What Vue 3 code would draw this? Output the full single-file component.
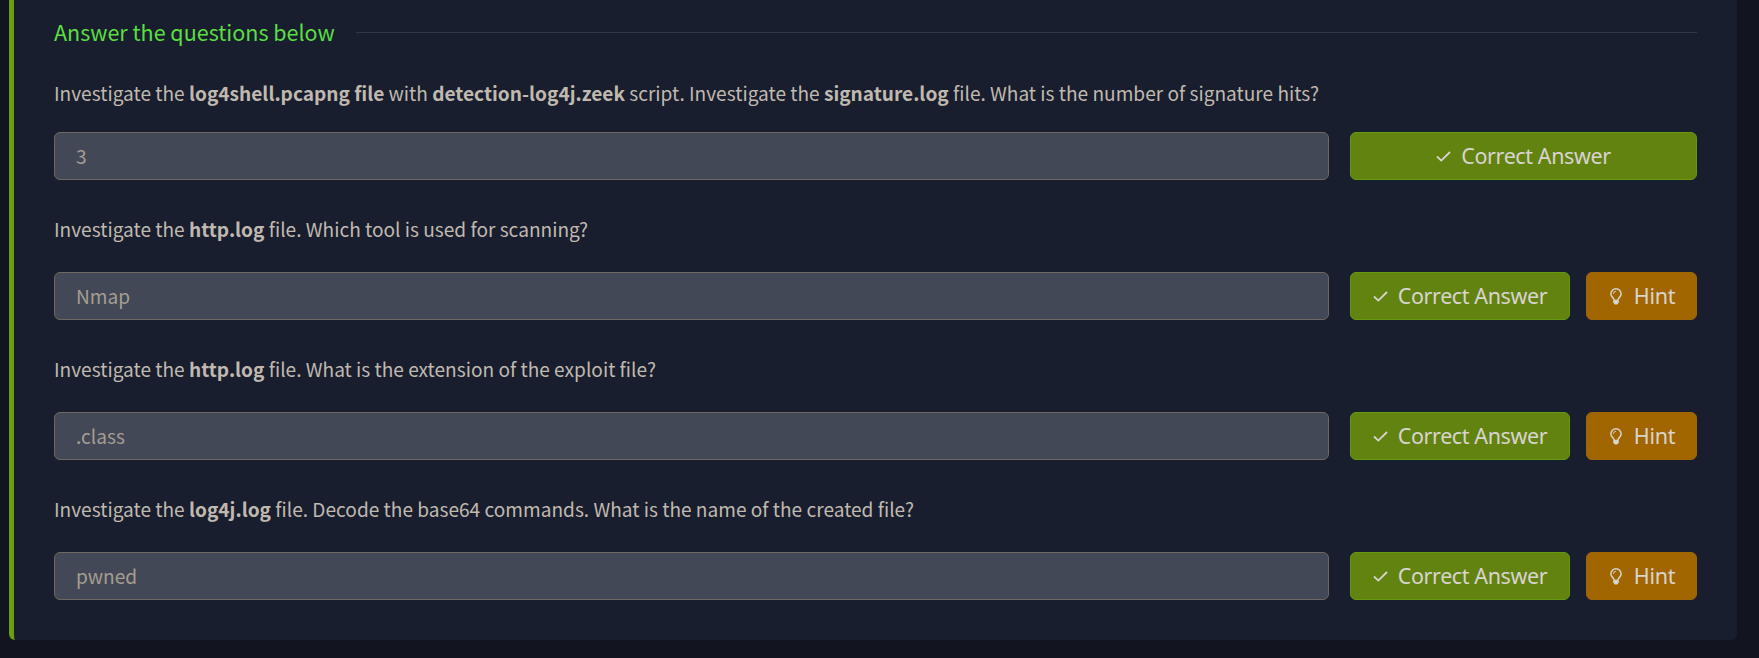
<script setup>
const questions = [
  {
    parts: [
      { t: 'Investigate the ' }, { t: 'log4shell.pcapng file', b: true }, { t: ' with ' },
      { t: 'detection-log4j.zeek', b: true }, { t: ' script. Investigate the ' },
      { t: 'signature.log', b: true }, { t: ' file. What is the number of signature hits?' },
    ],
    answer: '3', hint: false,
  },
  {
    parts: [{ t: 'Investigate the ' }, { t: 'http.log', b: true }, { t: ' file. Which tool is used for scanning?' }],
    answer: 'Nmap', hint: true,
  },
  {
    parts: [{ t: 'Investigate the ' }, { t: 'http.log', b: true }, { t: ' file. What is the extension of the exploit file?' }],
    answer: '.class', hint: true,
  },
  {
    parts: [{ t: 'Investigate the ' }, { t: 'log4j.log', b: true }, { t: ' file. Decode the base64 commands. What is the name of the created file?' }],
    answer: 'pwned', hint: true,
  },
]
</script>

<template>
  <main class="page">
    <section class="card">
      <header class="head">
        <h2>Answer the questions below</h2>
        <span class="rule"></span>
      </header>
      <div v-for="(q, i) in questions" :key="i" class="question">
        <p class="prompt"><template v-for="(p, j) in q.parts" :key="j"><strong v-if="p.b">{{ p.t }}</strong><span v-else>{{ p.t }}</span></template></p>
        <div class="row">
          <div class="field">{{ q.answer }}</div>
          <div class="actions">
            <button class="btn correct">
              <svg class="check" viewBox="0 0 15 12"><path d="M1 6.5 5.3 10.6 14 2" /></svg>
              <span>Correct Answer</span>
            </button>
            <button v-if="q.hint" class="btn hint">
              <svg class="bulb" viewBox="0 0 12 17">
                <path d="M4.1 12.4C4.1 9.9 .9 9 .9 5.9a5.1 5.1 0 0 1 10.2 0c0 3.1-3.2 4-3.2 6.5Z" />
                <path class="glint" d="M3.4 5.9A2.6 2.6 0 0 1 6 3.3" />
                <path class="cap" d="M3.2 13h5.6v1.5L7.3 16.5H4.7L3.2 14.5Z" />
              </svg>
              <span>Hint</span>
            </button>
          </div>
        </div>
      </div>
    </section>
  </main>
</template>

<style>
body { margin: 0; background: #12151f; }
</style>

<style scoped>
.page {
  box-sizing: border-box;
  height: 658px;
  padding: 0 22px 18px 9px;
  background: #12151f;
  font-family: "Noto Sans CJK SC", "Noto Sans", sans-serif;
  overflow: hidden;
}
.card {
  box-sizing: border-box;
  height: 640px;
  padding: 0 40px;
  border-left: 5px solid #6a9f10;
  border-radius: 0 0 6px 6px;
  background: #181e2d;
}
.head {
  display: flex;
  align-items: center;
  gap: 22px;
  height: 65px;
}
h2 {
  width: 280px;
  margin: 0;
  padding-bottom: 2px;
  color: #5adf43;
  font-size: 21.5px;
  font-weight: 400;
  line-height: 30px;
  white-space: nowrap;
}
.rule { flex: 1; height: 1px; background: #313745; }
.question { height: 140px; }
.question:nth-child(2) { height: 135px; }
.prompt {
  height: 72px;
  margin: 0;
  padding-top: 11px;
  box-sizing: border-box;
  color: #c0b9b0;
  font-size: 19.1px;
  line-height: 36px;
  white-space: pre;
}
.question:nth-child(2) .prompt { height: 67px; padding-top: 10px; }
strong { font-weight: 700; }
.row { display: flex; gap: 21px; height: 48px; }
.field {
  box-sizing: border-box;
  width: 1275px;
  padding: 0 21px;
  border: 1px solid #706860;
  border-radius: 6px;
  background: #434856;
  color: #a59d91;
  font-size: 19.1px;
  line-height: 46px;
}
.actions { display: flex; flex: 1; gap: 16px; }
.btn {
  display: flex;
  flex: 1;
  align-items: center;
  justify-content: center;
  gap: 10px;
  box-sizing: border-box;
  padding: 0;
  border: 1px solid #67980f;
  border-radius: 6px;
  background: #62830f;
  color: #d8d4cf;
  font-family: "Noto Sans", "Open Sans", sans-serif;
  font-size: 21.5px;
  letter-spacing: -0.4px;
  line-height: 30px;
  white-space: nowrap;
}
.hint { flex: 0 0 111px; gap: 12px; padding-left: 2px; letter-spacing: -0.3px; border-color: #a26600; background: #a26600; }
svg { fill: none; stroke: currentColor; stroke-width: 1.8; }
.check { width: 15px; height: 12px; }
.bulb { width: 12px; height: 17px; stroke-width: 1.5; }
.glint { stroke-width: 0.9; }
.cap { fill: currentColor; stroke: none; }
</style>
